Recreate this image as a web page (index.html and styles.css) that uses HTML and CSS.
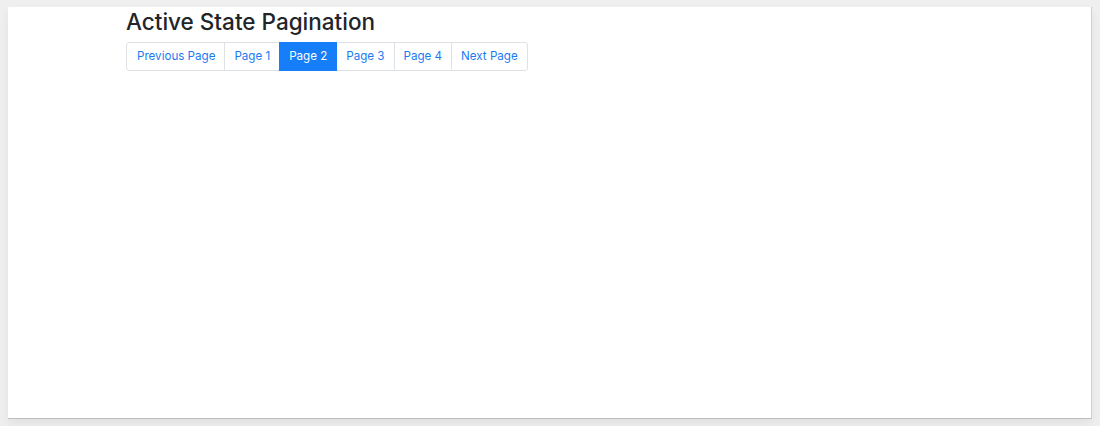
FILE: index.html
```html
<!DOCTYPE html>
<html lang="en">
<head>
    <meta charset="UTF-8">
    <meta name="viewport" content="width=device-width, initial-scale=1.0">
    <title>Active State Pagination</title>
    <link rel="stylesheet" href="styles.css">
</head>
<body>
    <div class="frame">
        <div class="container">
            <h2>Active State Pagination</h2>
            <ul class="pagination">
                <li class="page-item"><a class="page-link" href="#">Previous Page</a></li>
                <li class="page-item"><a class="page-link" href="#">Page 1</a></li>
                <li class="page-item active"><a class="page-link" href="#">Page 2</a></li>
                <li class="page-item"><a class="page-link" href="#">Page 3</a></li>
                <li class="page-item"><a class="page-link" href="#">Page 4</a></li>
                <li class="page-item"><a class="page-link" href="#">Next Page</a></li>
            </ul>
        </div>
    </div>
</body>
</html>
```

FILE: styles.css
```css
html, body {
    margin: 0;
    padding: 0;
}
body {
    font-family: Inter, "Liberation Sans", sans-serif;
    background: #efefef;
    color: #212529;
    height: 426px;
    overflow: hidden;
}
.frame {
    margin: 7px 8px 0 8px;
    height: 411px;
    background: white;
    border-right: 1px solid #cfcfcf;
    border-bottom: 1px solid #bdbdbd;
    box-shadow: 0 5px 10px rgba(0,0,0,0.06);
}
.container {
    padding: 1px 0 0 118px;
}
h2 {
    margin: 0;
    font-size: 22.5px;
    font-weight: 500;
    line-height: 28px;
    color: #212529;
}
.pagination {
    display: flex;
    list-style: none;
    margin: 6px 0 0 0;
    padding: 0;
}
.page-link {
    display: block;
    padding: 0 9px;
    height: 27px;
    line-height: 27px;
    font-size: 11.6px;
    color: #1a7bf0;
    text-decoration: none;
    background: white;
    border: 1px solid #dee2e6;
    margin-left: -1px;
}
.page-item:first-child .page-link {
    margin-left: 0;
    padding-left: 10px;
    border-radius: 3px 0 0 3px;
}
.page-item:last-child .page-link {
    border-radius: 0 3px 3px 0;
}
.page-item.active .page-link {
    background: #157ef8;
    border-color: #157ef8;
    color: white;
    position: relative;
    z-index: 1;
}
```
